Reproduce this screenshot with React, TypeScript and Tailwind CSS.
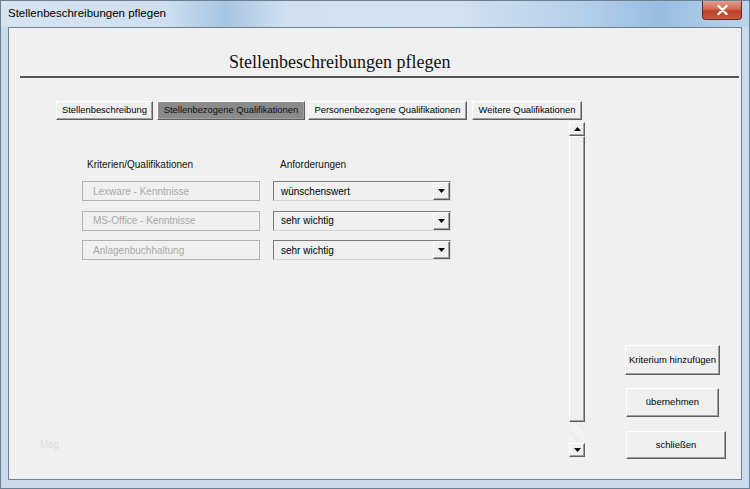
import React from "react";

const ui = { fontFamily: '"Liberation Sans", Arial, sans-serif' };

function Raised({ className = "", children, pressed = false }: { className?: string; children?: React.ReactNode; pressed?: boolean }) {
  return (
    <div
      className={`flex items-center justify-center border border-t-white border-l-white border-b-[#5e5e5e] border-r-[#5e5e5e] shadow-[inset_-1px_-1px_0_#a0a0a0] ${
        pressed ? "bg-[#8a8a8a]" : "bg-[#f0f0f0]"
      } ${className}`}
    >
      {children}
    </div>
  );
}

function ArrowBtn({ up = false, className = "" }: { up?: boolean; className?: string }) {
  return (
    <Raised className={className}>
      <svg width="7" height="4" viewBox="0 0 7 4">
        {up ? <path d="M0 4 L3.5 0 L7 4 Z" fill="#000" /> : <path d="M0 0 L7 0 L3.5 4 Z" fill="#000" />}
      </svg>
    </Raised>
  );
}

const rows = [
  { crit: "Lexware - Kenntnisse", req: "wünschenswert" },
  { crit: "MS-Office - Kenntnisse", req: "sehr wichtig" },
  { crit: "Anlagenbuchhaltung", req: "sehr wichtig" },
];

export default function App() {
  return (
    <div className="flex h-[489px] w-[750px] flex-col overflow-hidden border border-[#6d7f93] bg-[#c9dbed]" style={ui}>
      {/* Title bar */}
      <div className="flex h-[26px] shrink-0 bg-[linear-gradient(90deg,#d6e4f2_0%,#cddff0_22%,#a8c5e1_30%,#cfe0f1_38%,#d2e2f2_60%,#b4cfe9_78%,#98bde2_88%,#bcd4ec_100%)]">
        <span className="self-center pl-[7px] text-[11.5px] text-black">Stellenbeschreibungen pflegen</span>
        <div className="ml-auto mr-[7px] flex h-[19px] w-[40px] items-center justify-center self-start rounded-b-[4px] border border-t-0 border-[#6b2a22] bg-[linear-gradient(180deg,#e2a08d_0%,#d06a52_45%,#bd3e26_55%,#c95b43_100%)]">
          <svg width="11" height="10" viewBox="0 0 11 10">
            <path d="M1.5 1 L9.5 9 M9.5 1 L1.5 9" stroke="#fff" strokeWidth="2.4" strokeLinecap="round" />
          </svg>
        </div>
      </div>

      {/* Client area */}
      <div className="mx-[7px] mb-[8px] flex flex-1 flex-col border border-[#70808f] bg-[#f0f0f0]">
        <div className="mt-[23px] h-[22px] pl-[220px] text-[18px] leading-[22px] text-[#111]" style={{ fontFamily: '"Liberation Serif", "Times New Roman", serif' }}>
          Stellenbeschreibungen pflegen
        </div>
        <div className="ml-[11px] mr-[2px] mt-[3px] h-[2px] bg-[#555]" />

        <div className="mt-[23px] flex">
          {/* Msg */}
          <div className="flex w-[47px] flex-col justify-end pb-[7px] pl-[31px]">
            <span className="text-[10px] text-[#dcdcdc]">Msg</span>
          </div>

          {/* Tabs + page */}
          <div className="flex w-[529px] flex-col">
            <div className="flex h-[19px] text-[9.4px] text-black">
              <Raised className="w-[97px]">Stellenbeschreibung</Raised>
              <Raised className="ml-[4px] w-[148px] text-[#111]" pressed>
                Stellenbezogene Qualifikationen
              </Raised>
              <Raised className="ml-[3px] w-[159px]">Personenbezogene Qualifikationen</Raised>
              <Raised className="ml-[5px] w-[110px]">Weitere Qualifikationen</Raised>
            </div>

            <div className="mt-[2px] flex h-[335px]">
              <div className="flex flex-1 flex-col pt-[35px] text-[10px]">
                <div className="flex h-[14px] items-center pl-[31px] text-[#111]">
                  <span className="w-[193px]">Kriterien/Qualifikationen</span>
                  <span>Anforderungen</span>
                </div>
                <div className="mt-[10px] flex flex-col gap-[9.5px] pl-[26px]">
                  {rows.map((r) => (
                    <div key={r.crit} className="flex h-[20px] gap-[13px]">
                      <div className="flex w-[178px] items-center border border-[#b0b0b0] pl-[10px] text-[#a8a8a8]">{r.crit}</div>
                      <div className="flex w-[178px] items-center border border-t-[#7a7a7a] border-l-[#7a7a7a] border-b-[#d8d8d8] border-r-[#d8d8d8] bg-[#f0f0f0]">
                        <span className="flex-1 pl-[7px] text-black">{r.req}</span>
                        <ArrowBtn className="h-[18px] w-[17px]" />
                      </div>
                    </div>
                  ))}
                </div>
              </div>

              {/* Scrollbar */}
              <div className="flex w-[16px] flex-col bg-[#f4f4f4]">
                <ArrowBtn up className="h-[14px] w-[16px]" />
                <Raised className="h-[286px] w-[16px]" />
                <div className="flex-1 bg-[repeating-linear-gradient(45deg,#f7f7f7_0px,#f7f7f7_1px,#e9e9e9_1px,#e9e9e9_2px)]" />
                <ArrowBtn className="h-[14px] w-[16px]" />
              </div>
            </div>
          </div>

          {/* Buttons */}
          <div className="ml-[40px] flex flex-col items-start pt-[244px] text-[9.5px] text-black">
            <Raised className="h-[30px] w-[95px]">Kriterium hinzufügen</Raised>
            <Raised className="ml-[1px] mt-[13px] h-[29px] w-[93px]">übernehmen</Raised>
            <Raised className="ml-[1px] mt-[14px] h-[28px] w-[100px]">schließen</Raised>
          </div>
        </div>
      </div>
    </div>
  );
}
